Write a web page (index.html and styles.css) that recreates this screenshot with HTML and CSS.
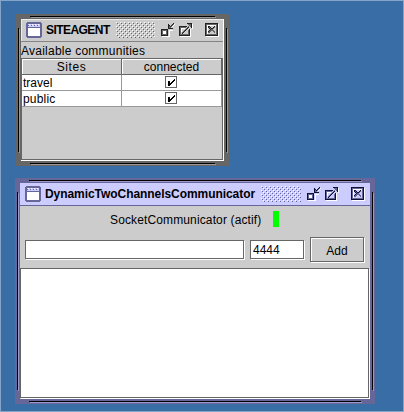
FILE: index.html
```
<!DOCTYPE html>
<html lang="en">
<head>
<meta charset="utf-8">
<title>Communities</title>
<link rel="stylesheet" href="styles.css">
</head>
<body>
<svg width="0" height="0" class="defs" shape-rendering="crispEdges">
  <symbol id="frame" viewBox="0 0 16 16">
    <path fill="#669" d="M1 0h14v1h1v14h-1v1H1v-1H0V1h1z"/>
    <path fill="#ccf" d="M2 2h12v3H2z"/>
    <path fill="#fff" d="M2 6h12v8H2zM3 2h1v1H3zM6 2h1v1H6zM9 2h1v1H9zM12 2h1v1h-1z"/>
    <path fill="#669" d="M2 3h1v1H2zM5 3h1v1H5zM8 3h1v1H8zM11 3h1v1h-1z"/>
  </symbol>
  <symbol id="iconify" viewBox="0 0 16 16">
    <path fill="#fff" d="M2 14h7V8h1v7H2zM9 8h4v1H9zM13 3h1V2h1v1h-1v1h-1v1h-1V4h1z"/>
    <path class="ink" d="M1 7h7v7H1zM8 2h1v1h1v1h1V3h1V2h1V1h1v1h-1v1h-1v1h-1v2h2v1H8z"/>
    <path class="mid" d="M2 8h5v5H2zM9 4h1v1h1V4h1V3h1V2h1v1h-1v1h-1v1h-1v1H9z"/>
    <path class="ink" d="M3 9h3v3H3z"/>
    <path fill="#fff" d="M4 10h2v2H4zM3 9h3v1H4v2H3z"/>
  </symbol>
  <symbol id="maximize" viewBox="0 0 16 16">
    <path fill="#fff" d="M2 14h10V7h1v8H2zM14 2h1v5h-1z"/>
    <path class="ink" d="M1 4h8v1H2v8h9V7h1v7H1zM9 1h5v5h-1V2H9z"/>
    <path class="mid" d="M2 5h6v1H3v6h7V8h1v5H2zM10 2h3v3h-1V4h-1v1h-1v1H9v1H8v1H7v1H6v1H5v1H4v-1h1V9h1V8h1V7h1V6h1V5h1V4h1V3h-1z"/>
    <path class="ink" d="M4 11h1v-1h1V9h1V8h1V7h1V6h1V5h1v1h-1v1H9v1H8v1H7v1H6v1H5v1H4z"/>
    <path fill="#fff" d="M3 6h4v1H4v3H3z"/>
  </symbol>
  <symbol id="close" viewBox="0 0 16 16">
    <path fill="#fff" d="M2 2h13v13H2z"/>
    <path class="ink" d="M1 1h13v13H1z"/>
    <path class="mid" d="M2 2h11v11H2z"/>
    <path class="bg" d="M3 3h9v9H3z"/>
    <path fill="#fff" d="M3 3h9v1H4v8H3z"/>
    <path class="ink" d="M4 4h2v1h1v1h1v1H7V6H6V5H5v1h1v1h1v1H6v1H5v1H4V9h1V8h1V7H5V6H4zM10 4h1v1h-1v1H9v1H8V6h1V5h1zM9 8h1v1h1v2h-1v-1H9V9H8V8z"/>
    <path class="mid" d="M5 5h1v1h1v1h2V6h1V5h1v1h-1v1H9v1h1v1h1v2h-1v-1H9V9H7v1H6v1H4v-1h1V9h1V8h1V7H6V6H5z"/>
  </symbol>
  <symbol id="check" viewBox="0 0 12 12">
    <path fill="#666" d="M0 0h12v1H1v11H0zM11 1h1v11H1v-1h10z"/>
    <path d="M3 5h2v2h1V6h1V5h1V4h1V3h1v2H9v1H8v1H7v1H6v1H5v1H3z"/>
  </symbol>
</svg>
<main class="desktop">
  <section class="window gray">
    <i class="groove top"></i><i class="groove bottom"></i><i class="groove left"></i><i class="groove right"></i>
    <div class="inner">
      <header class="titlebar">
        <svg class="icon"><use href="#frame"/></svg>
        <h1 class="t-site">SITEAGENT</h1>
        <span class="bumps"></span>
        <svg class="icon"><use href="#iconify"/></svg>
        <svg class="icon max"><use href="#maximize"/></svg>
        <svg class="icon cls"><use href="#close"/></svg>
      </header>
      <div class="caption">Available communities</div>
      <div class="pane">
        <div class="table">
          <div class="th t-sites">Sites</div><div class="th">connected</div>
          <div class="td">travel</div><div class="td check"><svg><use href="#check"/></svg></div>
          <div class="td t-public">public</div><div class="td check"><svg><use href="#check"/></svg></div>
        </div>
      </div>
    </div>
  </section>
  <section class="window violet">
    <i class="groove top"></i><i class="groove bottom"></i><i class="groove left"></i><i class="groove right"></i>
    <div class="inner">
      <header class="titlebar">
        <svg class="icon"><use href="#frame"/></svg>
        <h1 class="t-dyn">DynamicTwoChannelsCommunicator</h1>
        <span class="bumps"></span>
        <svg class="icon"><use href="#iconify"/></svg>
        <svg class="icon max"><use href="#maximize"/></svg>
        <svg class="icon cls"><use href="#close"/></svg>
      </header>
      <div class="status"><span class="t-socket">SocketCommunicator (actif)</span><b class="lamp"></b></div>
      <div class="form">
        <div class="field host"></div>
        <div class="field port">4444</div>
        <div class="button">Add</div>
      </div>
      <div class="output"></div>
    </div>
  </section>
</main>
</body>
</html>
```

FILE: styles.css
```
* { box-sizing: border-box; }
body { margin: 0; font: 12px/16px "Liberation Sans", Arial, sans-serif; color: #000; }
.defs { position: absolute; }
.desktop {
  width: 404px; height: 412px; background: #396da5;
  border: 1px solid #84a5c6;
  padding: 13px 0 0 14px;
  display: flex; flex-direction: column; gap: 12px;
}
.window { position: relative; padding: 5px; background: var(--mid); }
.gray { --mid: #666; --soft: #999; --bg: #ccc; --ink: #222; --line: #848484; width: 213px; height: 152px; margin-left: 1px; }
.violet { --mid: #666699; --soft: #9999cc; --bg: #ccccff; --ink: #111133; --line: #666699; width: 360px; height: 226px; }
.mid { fill: var(--mid); }
.bg { fill: var(--bg); }
.ink { fill: var(--ink); }
.groove { position: absolute; background: #000; }
.top, .bottom { left: 14px; right: 14px; height: 1px; box-shadow: 1px 1px var(--soft); }
.left, .right { top: 14px; bottom: 14px; width: 1px; box-shadow: 1px 1px var(--soft); }
.top { top: 2px; }
.bottom { bottom: 2px; }
.left { left: 2px; }
.right { right: 2px; }
.inner { height: 100%; background: #ccc; display: flex; flex-direction: column; }
.gray .inner { border-right: 1px solid #fff; border-bottom: 1px solid #fff; }
.titlebar {
  height: 23px; flex: none; display: flex; align-items: center; padding: 0 4px 0 5px;
  background: var(--bg); border-bottom: 1px solid var(--line);
}
.gray .titlebar { padding-right: 3px; box-shadow: inset 1px 1px #ffffffa0; }
.icon { width: 16px; height: 16px; flex: none; }
.max { margin-left: 2px; }
.cls { margin-left: 10px; }
h1 { margin: 0 6px 0 4px; font-size: 12px; line-height: 16px; white-space: nowrap; flex: none; }
.t-site { letter-spacing: -0.55px; }
.t-dyn { letter-spacing: -0.06px; }
.bumps {
  flex: 1; height: 16px; margin-right: 5px;
  background:
    conic-gradient(from 270deg at 1px 1px, #fff 90deg, transparent 0) 0 0 / 4px 4px,
    conic-gradient(from 270deg at 1px 1px, #fff 90deg, transparent 0) 2px 2px / 4px 4px,
    conic-gradient(from 270deg at 1px 1px, var(--mid) 90deg, transparent 0) 1px 1px / 4px 4px,
    conic-gradient(from 270deg at 1px 1px, var(--mid) 90deg, transparent 0) 3px 3px / 4px 4px;
}
.caption { height: 16px; line-height: 18px; white-space: nowrap; letter-spacing: 0.24px; }
.pane { flex: 1; border: 1px solid #666; }
.table { display: grid; grid-template-columns: 100px 100px; grid-template-rows: repeat(3, 16px); width: 200px; }
.th { background: #ccc; border: 1px solid #666; border-width: 0 1px 1px 0; text-align: center; line-height: 16px; box-shadow: inset 1px 1px #fff; }
.t-sites { letter-spacing: 0.6px; }
.td { background: #fff; border: solid #999; border-width: 0 1px 1px 0; padding-left: 1px; line-height: 16px; }
.t-public { letter-spacing: 0.2px; }
.check { display: flex; justify-content: center; padding: 0 2px 0 0; }
.check svg { width: 12px; height: 12px; margin-top: 1px; }
.status { height: 31px; flex: none; display: flex; padding: 5px 0 0 90px; white-space: nowrap; }
.t-socket { width: 163px; line-height: 18px; letter-spacing: 0.13px; }
.lamp { width: 6px; height: 16px; background: #0f0; }
.form { display: flex; align-items: flex-start; height: 31px; flex: none; padding: 0 5px; }
.field { height: 19px; margin-top: 3px; background: #fff; border: 1px solid #666; box-shadow: 1px 1px #fff; padding-left: 2px; line-height: 19px; }
.host { width: 219px; margin-right: 6px; }
.port { width: 54px; margin-right: 6px; }
.button { width: 54px; height: 25px; border: 1px solid #666; box-shadow: 1px 1px #fff, inset 1px 1px #fff; text-align: center; line-height: 26px; }
.output { flex: 1; background: #fff; border: 1px solid #666; margin: 0 1px 1px 0; box-shadow: 1px 1px #fff; }
```
